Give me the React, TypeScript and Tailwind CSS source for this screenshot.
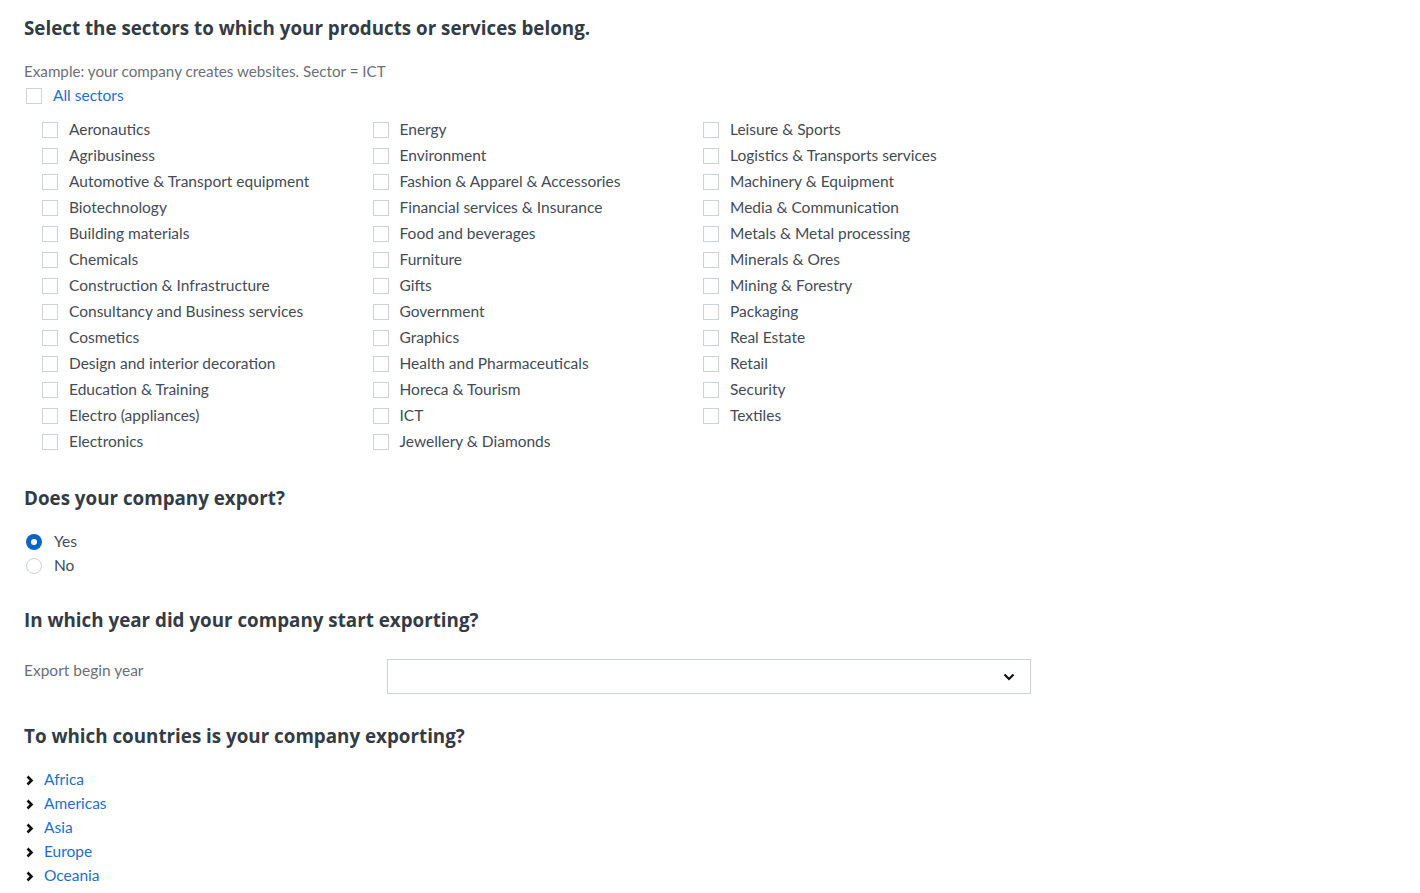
import React from "react";

const col1 = ["Aeronautics","Agribusiness","Automotive & Transport equipment","Biotechnology","Building materials","Chemicals","Construction & Infrastructure","Consultancy and Business services","Cosmetics","Design and interior decoration","Education & Training","Electro (appliances)","Electronics"];
const col2 = ["Energy","Environment","Fashion & Apparel & Accessories","Financial services & Insurance","Food and beverages","Furniture","Gifts","Government","Graphics","Health and Pharmaceuticals","Horeca & Tourism","ICT","Jewellery & Diamonds"];
const col3 = ["Leisure & Sports","Logistics & Transports services","Machinery & Equipment","Media & Communication","Metals & Metal processing","Minerals & Ores","Mining & Forestry","Packaging","Real Estate","Retail","Security","Textiles"];

function Box() {
  return <span className="w-4 h-4 border border-[#cbd2da] bg-white shrink-0 block" />;
}

function Item({ label }: { label: string }) {
  return (
    <label className="flex items-center h-[26px] gap-[11px]">
      <Box />
      <span className="text-[15.5px] text-[#444b55]">{label}</span>
    </label>
  );
}

const H = "font-['Open_Sans',sans-serif] font-bold text-[18.8px] text-[#333b44] leading-[24px]";

export default function App() {
  return (
    <div className="bg-white min-h-[893px] font-['Lato',sans-serif] pl-6 pt-[16px]">
      <h2 className={H}>Select the sectors to which your products or services belong.</h2>
      <p className="mt-[22px] text-[15.2px] text-[#6b7078] leading-[18px]">Example: your company creates websites. Sector = ICT</p>
      <label className="flex items-center gap-[11px] mt-[7px] ml-[2px] h-[18px]">
        <Box />
        <span className="text-[15.5px] text-[#1f6fc9]">All sectors</span>
      </label>
      <div className="grid grid-cols-[330.5px_330.5px_330.5px] ml-[18px] mt-[12px]">
        {[col1, col2, col3].map((c, i) => (
          <div key={i} className="flex flex-col">
            {c.map((l) => <Item key={l} label={l} />)}
          </div>
        ))}
      </div>

      <h2 className={H + " mt-[31px]"}>Does your company export?</h2>
      <div className="mt-[20px] ml-[2px] flex flex-col">
        <label className="flex items-center gap-[12px] h-[24px]">
          <span className="w-4 h-4 rounded-full bg-[#0b64c8] flex items-center justify-center"><span className="w-[6px] h-[6px] rounded-full bg-white" /></span>
          <span className="text-[15.5px] text-[#444b55]">Yes</span>
        </label>
        <label className="flex items-center gap-[12px] h-[24px]">
          <span className="w-4 h-4 rounded-full border border-[#cbd2da]" />
          <span className="text-[15.5px] text-[#444b55]">No</span>
        </label>
      </div>

      <h2 className={H + " mt-[30px]"}>In which year did your company start exporting?</h2>
      <div className="flex items-start mt-[27px]">
        <span className="w-[363px] text-[15.5px] text-[#6b7078]">Export begin year</span>
        <div className="w-[644px] h-[35px] border border-[#cbd2da] flex items-center justify-end pr-[15px]">
          <svg width="12" height="8" viewBox="0 0 12 8"><path d="M1.5 1.5 L6 6 L10.5 1.5" fill="none" stroke="#111" strokeWidth="2.2" /></svg>
        </div>
      </div>

      <h2 className={H + " mt-[30px]"}>To which countries is your company exporting?</h2>
      <ul className="mt-[20px] flex flex-col">
        {["Africa","Americas","Asia","Europe","Oceania"].map((r) => (
          <li key={r} className="flex items-center h-[24px] gap-[10px]">
            <svg width="9" height="11" viewBox="0 0 9 11" className="ml-[1px]"><path d="M2.5 1.5 L6.5 5.5 L2.5 9.5" fill="none" stroke="#111" strokeWidth="2.6" /></svg>
            <span className="text-[15.5px] text-[#1f6fc9]">{r}</span>
          </li>
        ))}
      </ul>
    </div>
  );
}
